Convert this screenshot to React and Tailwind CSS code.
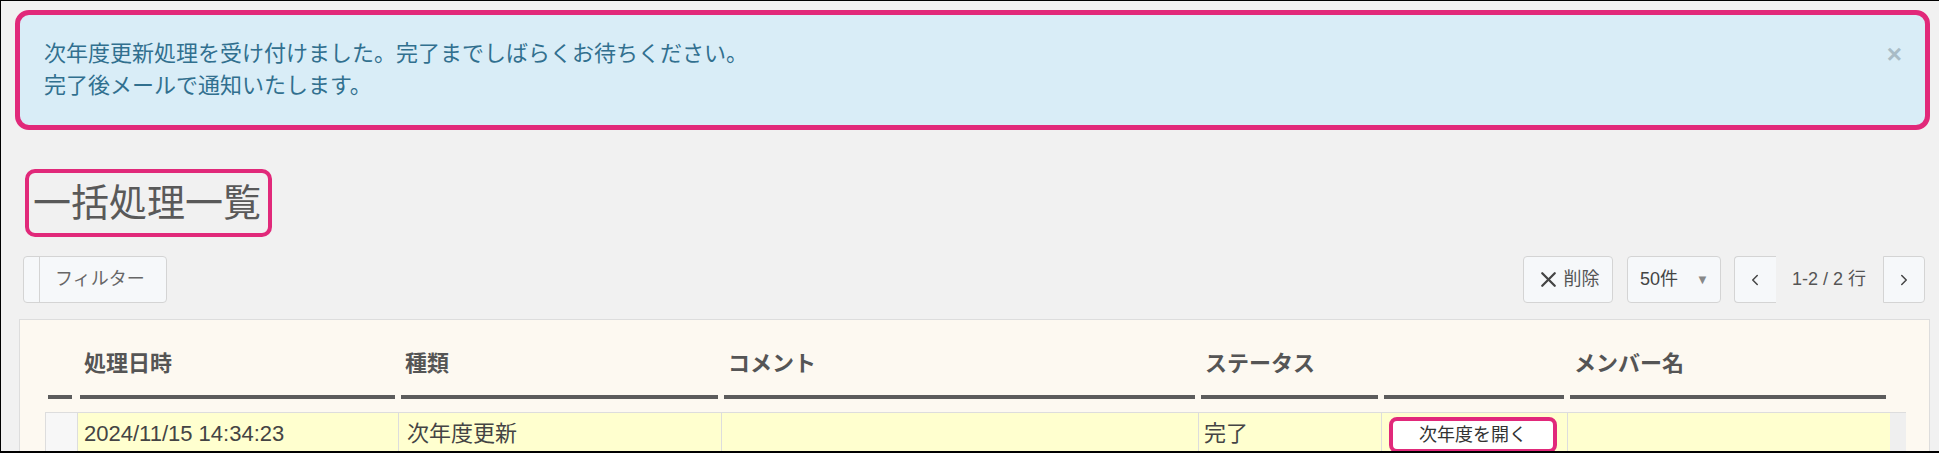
import React from 'react';
import { X, ChevronLeft, ChevronRight } from 'lucide-react';

const font = "font-['Liberation_Sans','Noto_Sans_CJK_JP',sans-serif]";

const cols = [
  { w: 'w-[32px]', label: '' },
  { w: 'w-[321px]', label: '処理日時' },
  { w: 'w-[323px]', label: '種類' },
  { w: 'w-[477px]', label: 'コメント' },
  { w: 'w-[183px]', label: 'ステータス' },
  { w: 'w-[186px]', label: '' },
  { w: 'w-[322px]', label: 'メンバー名' },
];

const Toolbar = () => (
  <div className="mt-[19px] ml-[22px] mr-[14px] flex h-[47px] items-center">
    <button className="flex h-[47px] w-[144px] rounded-[4px] border border-[#d4d4d4] bg-[#f6f8fa] text-[18px] text-[#666]">
      <span className="h-full w-[16px] rounded-l-[4px] border-r border-[#d4d4d4]"></span>
      <span className="flex h-full flex-1 items-center pl-[15px]">フィルター</span>
    </button>

    <div className="ml-auto flex items-center">
      <button className="flex h-[47px] w-[90px] items-center justify-center gap-[2px] rounded-[4px] border border-[#d4d4d4] bg-[#f6f8fa] text-[18px] text-[#555]">
        <X size={25} strokeWidth={2.2} className="text-[#444]" />
        削除
      </button>
      <button className="ml-[14px] flex h-[47px] w-[94px] items-center rounded-[4px] border border-[#d4d4d4] bg-[#f6f8fa] pl-[12px] text-[18px] text-[#444]">
        50件
        <span className="ml-auto mr-[11px] text-[13px] text-[#888]">▼</span>
      </button>
      <button className="ml-[13px] flex h-[47px] w-[42px] items-center justify-center rounded-l-[4px] border-y border-l border-[#d4d4d4] bg-[#f6f8fa] text-[#444]">
        <ChevronLeft size={18} strokeWidth={2} />
      </button>
      <span className="ml-[16px] mr-[17px] text-[18px] text-[#555]">1-2 / 2 行</span>
      <button className="flex h-[47px] w-[42px] items-center justify-center rounded-r-[4px] border border-[#d4d4d4] bg-[#f6f8fa] text-[#444]">
        <ChevronRight size={18} strokeWidth={2} />
      </button>
    </div>
  </div>
);

const Table = () => (
  <div className="mt-[16px] ml-[18px] h-[200px] w-[1911px] border border-[#dddddd] bg-[#fdf9f1] pl-[25px] pt-[29px]">
    <div className="flex">
      {cols.map((c, i) => (
        <div key={i} className={`${c.w} ${i === 0 ? 'pl-[3px] pr-[5px]' : 'px-[3px]'}`}>
          <div className="h-[30px] border-b-4 border-[#5c5c5c] box-content pb-[16px] pl-[4px] text-[22px] font-bold leading-[30px] text-[#555]">
            {c.label}
          </div>
        </div>
      ))}
    </div>

    <div className="mt-[13px] flex h-[50px] text-[22px] leading-[30px] text-[#444]">
      <div className="flex border-l border-t border-[#dddddd]">
        <div className="w-[32px] border-r border-[#dddddd] bg-[#f7f7f7]"></div>
        <div className="w-[321px] border-r border-[#dddddd] bg-[#ffffcf] pl-[6px] pt-[6px]">2024/11/15 14:34:23</div>
        <div className="w-[323px] border-r border-[#dddddd] bg-[#ffffcf] pl-[8px] pt-[6px]">次年度更新</div>
        <div className="w-[477px] border-r border-[#dddddd] bg-[#ffffcf]"></div>
        <div className="w-[183px] border-r border-[#dddddd] bg-[#ffffcf] pl-[5px] pt-[6px]">完了</div>
        <div className="w-[186px] border-r border-[#dddddd] bg-[#ffffcf] pl-[7px] pt-[4px]">
          <button className="flex h-[36px] w-[168px] items-center justify-center rounded-[8px] border-4 border-[#e1297a] bg-white text-[18px] leading-none text-[#333]">
            次年度を開く
          </button>
        </div>
        <div className="w-[322px] bg-[#ffffcf]"></div>
      </div>
      <div className="w-[16px] border-t border-[#dddddd] bg-[#efefef]"></div>
    </div>
  </div>
);

export default function App() {
  return (
    <div className={`h-[453px] w-[1939px] overflow-hidden border-b-2 border-l border-t border-black bg-[#f1f1f1] ${font}`}>
      <div className="ml-[14px] mt-[9px] flex h-[120px] w-[1915px] items-start rounded-[14px] border-[5px] border-[#e1297a] bg-[#d9edf7] pl-[24px] pt-[23px] text-[22px] leading-[32px] text-[#31708f]">
        <div className="flex-1">
          <p>次年度更新処理を受け付けました。完了までしばらくお待ちください。</p>
          <p>完了後メールで通知いたします。</p>
        </div>
        <span className="mr-[23px] text-[26px] font-bold leading-[32px] text-[#a9bcc6]">×</span>
      </div>

      <div className="ml-[24px] mt-[39px] flex">
        <h1 className="h-[68px] rounded-[10px] border-4 border-[#e1297a] pl-[4px] pr-[7px] text-[38px] leading-[60px] text-[#595959]">
          一括処理一覧
        </h1>
      </div>

      <Toolbar />
      <Table />
    </div>
  );
}
